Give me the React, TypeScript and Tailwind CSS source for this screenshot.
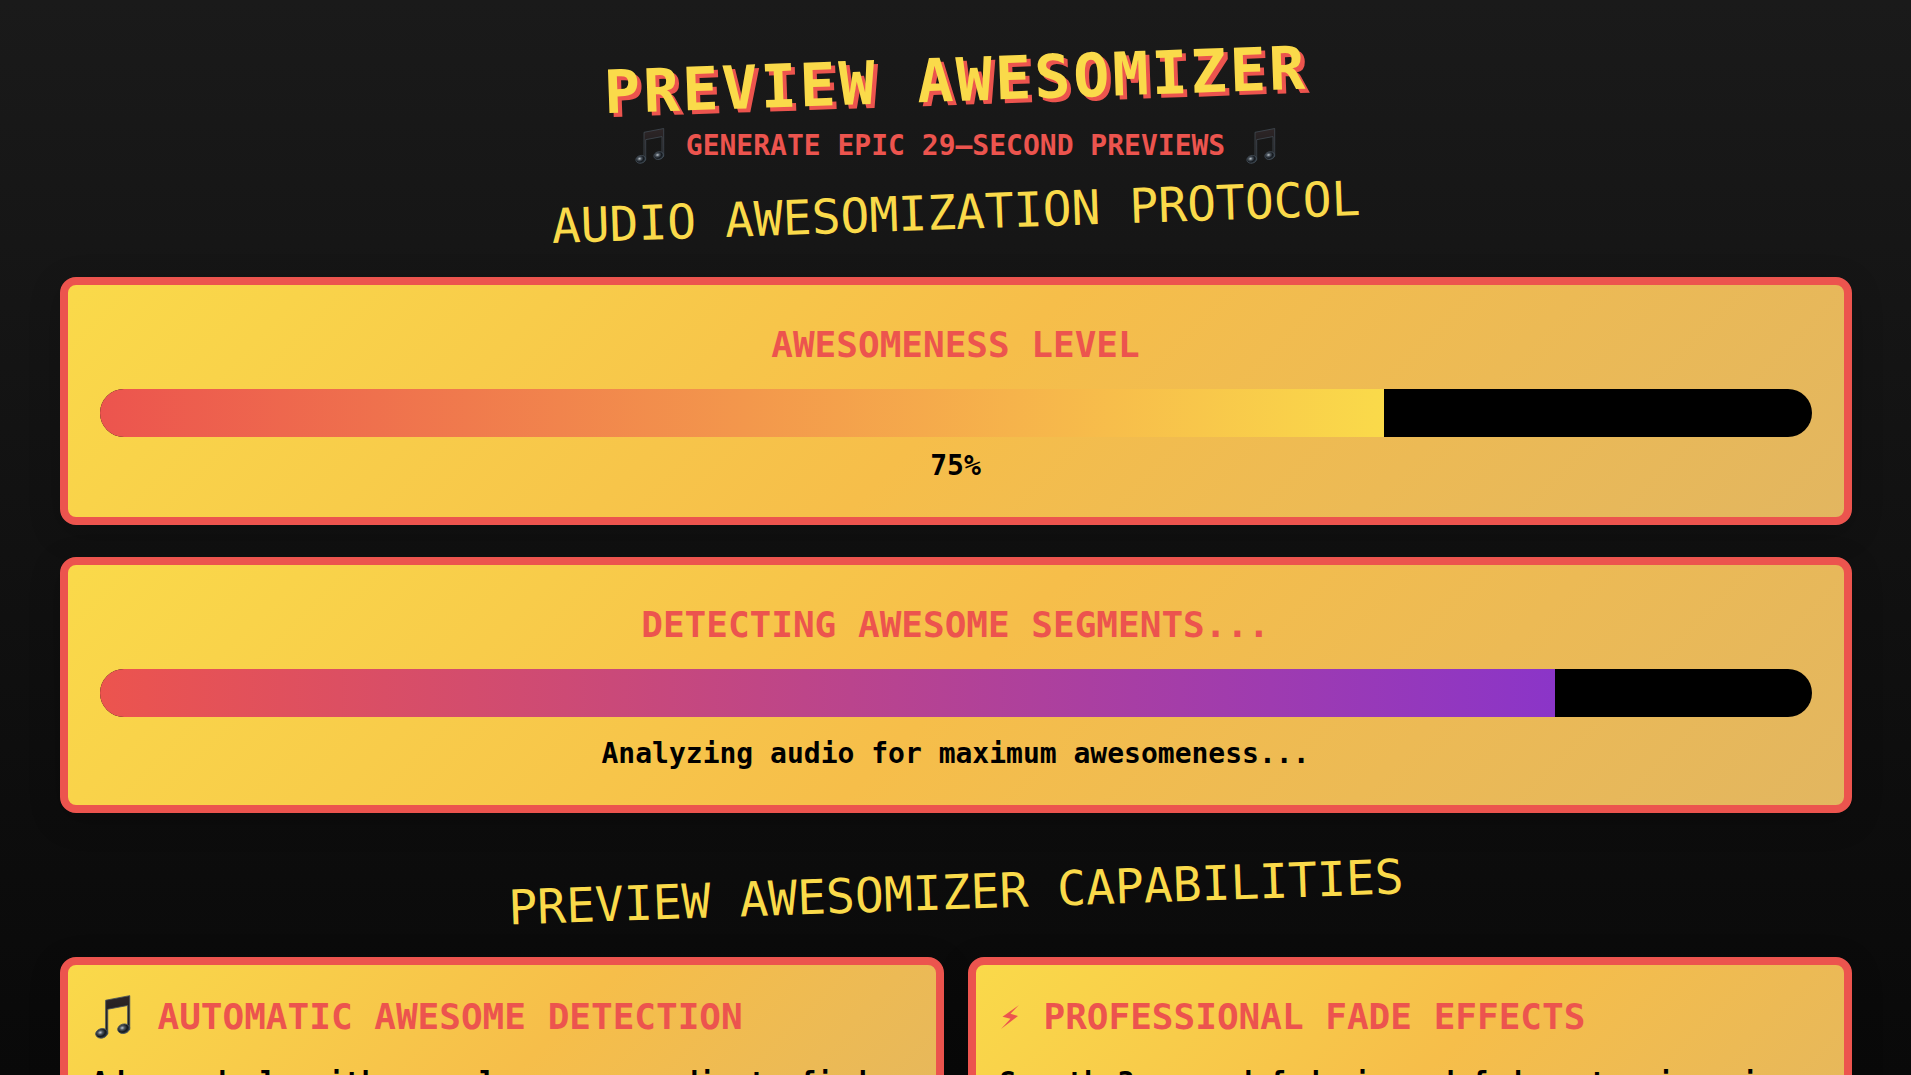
import { useId } from "react";
import type { ReactNode } from "react";

const features = [
    {
        icon: "note",
        title: "AUTOMATIC AWESOME DETECTION",
        text: "Advanced algorithms analyze your audio to find the most awesome segments and build the perfect preview from them",
    },
    {
        icon: "bolt",
        title: "PROFESSIONAL FADE EFFECTS",
        text: "Smooth 3-second fade-in and fade-out using sine curves for a clean, polished start and finish on every track",
    },
];

function NoteIcon({ className }: { className: string }) {
    const id = useId();
    return (
        <svg viewBox="0 0 36 42" className={className} aria-hidden="true">
            <defs>
                <linearGradient id={id + "beam"} x1="0" y1="0" x2="0" y2="1">
                    <stop offset="0" stopColor="#2e2627" />
                    <stop offset="1" stopColor="#171719" />
                </linearGradient>
                <radialGradient id={id + "head"} cx="0.4" cy="0.38" r="0.65">
                    <stop offset="0" stopColor="#c3c9cf" />
                    <stop offset="0.3" stopColor="#4d565f" />
                    <stop offset="0.65" stopColor="#14181d" />
                    <stop offset="1" stopColor="#36414a" />
                </radialGradient>
            </defs>
            <path
                d="M11 5 L34 0.6 V33 H32 V10 L13 13.6 V37 H11 Z"
                fill={`url(#${id}beam)`}
                stroke="#47525c"
                strokeWidth="0.8"
                strokeLinejoin="round"
            />
            <ellipse cx="7.2" cy="36.6" rx="5.8" ry="4.5" transform="rotate(-14 7.2 36.6)" fill={`url(#${id}head)`} stroke="#47525c" strokeWidth="0.8" />
            <ellipse cx="28.2" cy="32.2" rx="5.8" ry="4.5" transform="rotate(-14 28.2 32.2)" fill={`url(#${id}head)`} stroke="#47525c" strokeWidth="0.8" />
        </svg>
    );
}

function BoltIcon({ className }: { className: string }) {
    return (
        <svg viewBox="0 0 18 24" className={className} aria-hidden="true" fill="currentColor">
            <path d="M18 0 L1.5 11.8 L9.5 13.8 L0 24 L17 11 L9.5 8.8 Z" />
        </svg>
    );
}

function Card({ children, className }: { children: ReactNode; className: string }) {
    return (
        <div
            className={
                "rounded-2xl border-8 border-[#ec544e] bg-[linear-gradient(135deg,#fada4a_0%,#f6be4a_50%,#e2b660_100%)] bg-origin-border shadow-[0_8px_32px_rgba(0,0,0,0.2)] " +
                className
            }
        >
            {children}
        </div>
    );
}

function Meter({ label, value, fill }: { label: string; value: number; fill: string }) {
    return (
        <div
            role="progressbar"
            aria-label={label}
            aria-valuenow={value}
            aria-valuemin={0}
            aria-valuemax={100}
            className="h-12 w-full overflow-hidden rounded-full bg-black"
        >
            <div className={"h-full " + fill} style={{ width: `${value}%` }} />
        </div>
    );
}

function App() {
    return (
        <div className="h-screen overflow-hidden bg-linear-to-b from-[#1a1a1a] to-[#090909] font-['DejaVu_Sans_Mono',monospace] text-[28px] leading-10 font-bold text-black">
            <main className="mx-auto max-w-[1792px] pt-12">
                <header className="text-center">
                    <h1 className="-rotate-2 text-6xl leading-16 tracking-wider text-[#fada4a] [text-shadow:4px_4px_0_#ec544e]">
                        PREVIEW AWESOMIZER
                    </h1>
                    <p className="mt-[14px] flex items-center justify-center gap-[18px] text-[#ec544e]">
                        <NoteIcon className="h-9 w-9" />
                        GENERATE EPIC 29–SECOND PREVIEWS
                        <NoteIcon className="h-9 w-9" />
                    </p>
                </header>

                <section className="mt-[14px]">
                    <h2 className="mb-[33px] -rotate-2 text-center text-5xl leading-16 font-normal text-[#fada4a]">
                        AUDIO AWESOMIZATION PROTOCOL
                    </h2>
                    <Card className="mb-8 p-8 text-center">
                        <h3 className="mb-4 text-4xl leading-14 text-[#ec544e]">AWESOMENESS LEVEL</h3>
                        <Meter label="Awesomeness level" value={75} fill="bg-[linear-gradient(90deg,#ec544e,#fada4a)]" />
                        <p className="mt-[10px] leading-[38px]">75%</p>
                    </Card>
                    <Card className="p-8 text-center">
                        <h3 className="mb-4 text-4xl leading-14 text-[#ec544e]">DETECTING AWESOME SEGMENTS...</h3>
                        <Meter label="Detecting awesome segments" value={85} fill="bg-[linear-gradient(90deg,#ec544e,#8b35c8)]" />
                        <p className="mt-[18px] leading-[38px]">Analyzing audio for maximum awesomeness...</p>
                    </Card>
                </section>

                <section className="mt-[47px]">
                    <h2 className="mb-[33px] -rotate-2 text-center text-5xl leading-16 font-normal text-[#fada4a]">
                        PREVIEW AWESOMIZER CAPABILITIES
                    </h2>
                    <div className="grid grid-cols-2 gap-6">
                        {features.map((feature) => (
                            <Card key={feature.title} className="p-6">
                                <h3 className="mb-[18px] flex items-center gap-6 text-4xl leading-14 text-[#ec544e]">
                                    {feature.icon === "note" ? (
                                        <NoteIcon className="h-11 w-[42px]" />
                                    ) : (
                                        <BoltIcon className="h-6 w-5" />
                                    )}
                                    {feature.title}
                                </h3>
                                <p>{feature.text}</p>
                            </Card>
                        ))}
                    </div>
                </section>
            </main>
        </div>
    );
}

export default App;
